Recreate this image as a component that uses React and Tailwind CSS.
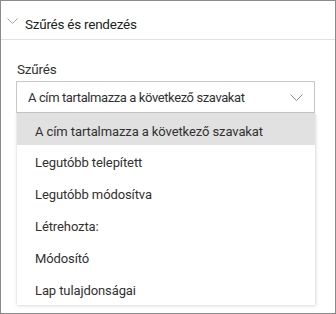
import React from "react";

const Chevron = ({ w, h, color }) => (
  <svg width={w} height={h} viewBox={`0 0 ${w} ${h}`} fill="none">
    <path d={`M0.5 0.5 L${w / 2} ${h - 0.5} L${w - 0.5} 0.5`} stroke={color} strokeWidth="1" />
  </svg>
);

const items = [
  "A cím tartalmazza a következő szavakat",
  "Legutóbb telepített",
  "Legutóbb módosítva",
  "Létrehozta:",
  "Módosító",
  "Lap tulajdonságai",
];

export default function App() {
  return (
    <div
      className="w-[336px] h-[314px] border border-[#8a8a8a] bg-white text-[#323130] overflow-hidden"
      style={{ fontFamily: 'Roboto, "Liberation Sans", Arial, sans-serif' }}
    >
      <div className="h-[39px] flex items-center border-b border-[#e1e1e1]">
        <div className="ml-[6px] mt-[2px] w-[18px] flex">
          <Chevron w={11} h={6} color="#a6a6a6" />
        </div>
        <span className="text-[13.5px] tracking-[-0.25px] text-[#201f1e] mt-[8px]">Szűrés és rendezés</span>
      </div>
      <div className="pl-[15px] w-[314px]">
        <div className="mt-[20px] text-[13.5px] tracking-[-0.2px] leading-[18px] h-[21px] pl-[1px]">Szűrés</div>
        <div className="h-[32px] border border-[#c8c8c8] flex items-center justify-between pl-[11px] pr-[11px]">
          <span className="text-[13px] tracking-[-0.4px] pt-[1px]">A cím tartalmazza a következő szavakat</span>
          <Chevron w={13} h={7} color="#8a8a8a" />
        </div>
        <div className="border-l border-[#ececec] shadow-[1px_1px_3px_rgba(0,0,0,0.15)]">
          {items.map((t, i) => (
            <div
              key={t}
              className={`h-[32px] flex items-center pl-[18px] text-[13px] tracking-[-0.1px] ${i === 0 ? "bg-[#e1e1e1]" : ""}`}
            >
              <span className={i === 0 ? "pt-[6px]" : "pt-[4px]"}>{t}</span>
            </div>
          ))}
        </div>
      </div>
    </div>
  );
}
